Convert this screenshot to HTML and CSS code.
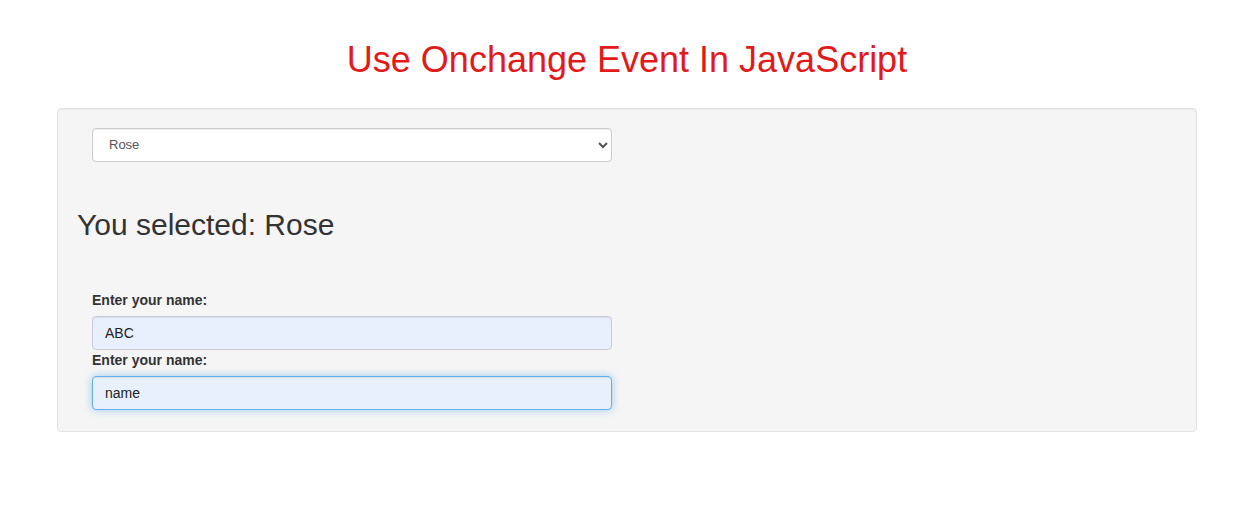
FILE: index.html
```html
<!DOCTYPE html>
<html>
<head>
<meta charset="utf-8">
<title>Use Onchange Event In JavaScript</title>
<link rel="stylesheet" href="styles.css">
</head>
<body>
<div class="container">
  <h1 class="title">Use Onchange Event In JavaScript</h1>
  <div class="well">
    <div class="row">
      <div class="col">
        <select class="form-control select">
          <option>Rose</option>
          <option>Lily</option>
          <option>Tulip</option>
        </select>
      </div>
    </div>
    <h2 class="result">You selected: Rose</h2>
    <div class="form">
      <div class="col">
        <label class="label">Enter your name:</label>
        <input class="form-control input" type="text" value="ABC">
        <label class="label">Enter your name:</label>
        <input class="form-control input focus" type="text" value="name">
      </div>
    </div>
  </div>
</div>
</body>
</html>
```
FILE: styles.css
```css
* { box-sizing: border-box; }
body {
  margin: 0;
  font-family: "Liberation Sans", Arial, sans-serif;
  font-size: 14px;
  line-height: 1.42857;
  color: #333;
  background: #fff;
}
.container {
  margin: 0 38px 0 57px;
  padding-top: 1px;
}
.title {
  margin: 39px 0 28px;
  font-size: 36px;
  font-weight: 400;
  line-height: 1.1;
  text-align: center;
  color: #e31a1a;
}
.well {
  padding: 19px 19px 21px;
  background: #f5f5f5;
  border: 1px solid #e3e3e3;
  border-radius: 4px;
  box-shadow: inset 0 1px 1px rgba(0,0,0,.05);
}
.col {
  width: 550px;
  padding: 0 15px;
}
.form-control {
  display: block;
  width: 100%;
  height: 34px;
  padding: 6px 12px;
  font-family: "Liberation Sans", Arial, sans-serif;
  font-size: 14px;
  line-height: 1.42857;
  color: #333;
  background: #fff;
  border: 1px solid #ccc;
  border-radius: 4px;
  box-shadow: inset 0 1px 1px rgba(0,0,0,.075);
}
.select {
  font-size: 13px;
  color: #555;
  padding-left: 12px;
}
.result {
  margin: 46px 0 49px;
  font-size: 30px;
  font-weight: 400;
  line-height: 1.1;
  color: #333;
}
.label {
  display: block;
  margin-bottom: 5px;
  font-weight: 700;
  font-size: 14px;
  line-height: 21px;
  color: #333;
}
.input {
  background: #e8f0fe;
  color: #222;
  border-color: #c9cdd3;
  font-size: 14px;
}
.focus {
  border-color: #66afe9;
  outline: 0;
  box-shadow: inset 0 1px 1px rgba(0,0,0,.075), 0 0 8px rgba(102,175,233,.6);
}
```
